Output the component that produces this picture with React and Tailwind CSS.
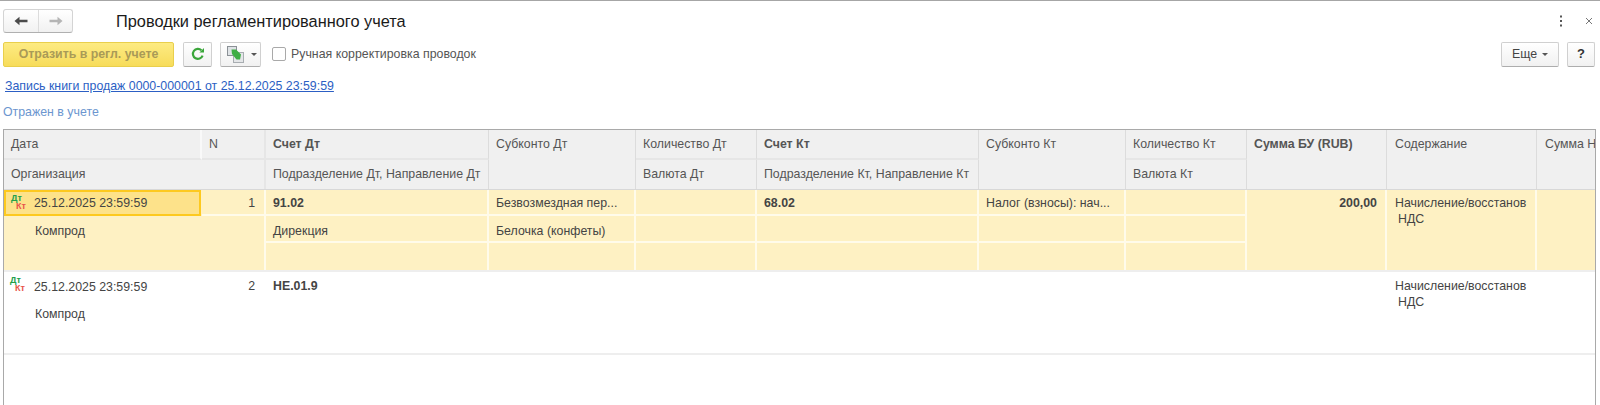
const font = { fontFamily: '"Liberation Sans", Arial, sans-serif' };

function DtKt() {
  return (
    <span className="relative block w-[17px] h-[16px] shrink-0 font-bold leading-none text-[9px]">
      <span className="absolute left-0 top-[-1px] text-[#22a04a]">Дт</span>
      <span className="absolute left-[5px] top-[7px] text-[#e8544a]">Кт</span>
    </span>
  );
}

function HeadCell({ children, className = "" }) {
  return <div className={"bg-[#f0f0f0] px-[7px] pt-[6px] text-[12.35px] leading-[16px] text-[#555] whitespace-nowrap overflow-hidden " + className}>{children}</div>;
}

function Cell({ children, className = "" }) {
  return <div className={"px-[7px] text-[12.35px] leading-[16px] text-[#444] whitespace-nowrap overflow-hidden " + className}>{children}</div>;
}

const cols = "grid-cols-[198px_64px_223px_147px_121px_222px_147px_121px_140px_150px_1fr]";

function Row({ selected, n, acc, sub1, sub2, krAcc, krSub, sum, org, place }) {
  const sep = selected ? "border-r-[2px] border-r-[#fffbea]" : "";
  const sepb = selected ? "border-b-[2px] border-b-[#fffbea]" : "";
  const bg = selected ? "bg-[#fef1c3]" : "bg-white";
  const top = selected ? "pt-[5px]" : "pt-[6px]";
  const second = selected ? "pt-[7px]" : "pt-[8px]";
  return (
    <div className={`grid ${cols} grid-rows-[26px_27px_27px] ${bg}`}>
      <div className={`flex items-center text-[12.35px] text-[#444] ${selected ? "bg-[#fde28a] border-[2px] border-[#fdc91f] pl-[5px] mr-[1px]" : "pl-[6px]"}`}>
        <DtKt /><span className={selected ? "ml-[6px]" : "ml-[7px] mt-[4px]"}>{place}</span>
      </div>
      <Cell className={`text-right ${top} ${selected ? "pr-[9px]" : "pr-[11px]"} ${sep} ${sepb}`}>{n}</Cell>
      <Cell className={`font-bold ${top} ${sep} ${sepb}`}>{acc}</Cell>
      <Cell className={`${top} ${sep} ${sepb}`}>{sub1}</Cell>
      <Cell className={`${sep} ${sepb}`} />
      <Cell className={`font-bold ${top} ${sep} ${sepb}`}>{krAcc}</Cell>
      <Cell className={`${top} ${sep} ${sepb}`}>{krSub}</Cell>
      <Cell className={`${sep} ${sepb}`} />
      <Cell className={`row-span-3 text-right font-bold pr-[8px] ${top} ${sep}`}>{sum}</Cell>
      <div className={`row-span-3 pl-[8px] ${top} text-[12.35px] leading-[16px] text-[#444] whitespace-nowrap overflow-hidden ${sep}`}>
        Начисление/восстанов<br /><span className="ml-[3px]">НДС</span>
      </div>
      <div className="row-span-3" />

      <div className={`col-span-2 row-span-2 pl-[31px] ${second} text-[12.35px] leading-[16px] text-[#444] ${sep}`}>{org}</div>
      <Cell className={`${second} ${sep} ${sepb}`}>{selected ? "Дирекция" : ""}</Cell>
      <Cell className={`${second} ${sep} ${sepb}`}>{sub2}</Cell>
      <Cell className={`${sep} ${sepb}`} />
      <Cell className={`${sep} ${sepb}`} />
      <Cell className={`${sep} ${sepb}`} />
      <Cell className={`${sep} ${sepb}`} />

      <Cell className={sep} />
      <Cell className={sep} />
      <Cell className={sep} />
      <Cell className={sep} />
      <Cell className={sep} />
      <Cell className={sep} />
    </div>
  );
}

export default function App() {
  return (
    <div className="w-[1600px] h-[405px] bg-white overflow-hidden border-t border-[#a6a6a6]" style={font}>
      {/* Title bar */}
      <div className="flex items-center h-[24px] mt-[8px] pl-[3px] pr-[7px]">
        <div className="flex w-[70px] h-[24px] rounded-[3px] border border-[#d4d4d4] border-b-[#b0b0b0] bg-gradient-to-b from-white to-[#f1f1f1]">
          <div className="w-[35px] flex items-center justify-center border-r border-[#dcdcdc]">
            <svg width="14" height="10" viewBox="0 0 14 10"><path d="M0.5 5 L5.5 0.8 V3.7 H13.5 V6.3 H5.5 V9.2 Z" fill="#4a4a4a" /></svg>
          </div>
          <div className="flex-1 flex items-center justify-center">
            <svg width="14" height="10" viewBox="0 0 14 10"><path d="M13.5 5 L8.5 0.8 V3.7 H0.5 V6.3 H8.5 V9.2 Z" fill="#b5b5b5" /></svg>
          </div>
        </div>
        <h1 className="ml-[43px] text-[16.35px] font-normal text-[#1a1a1a] whitespace-nowrap">Проводки регламентированного учета</h1>
        <div className="ml-auto flex items-center">
          <svg width="4" height="12" viewBox="0 0 4 12" className="mr-[22px]">
            <rect x="1" y="0.5" width="2" height="2" fill="#555" /><rect x="1" y="5" width="2" height="2" fill="#555" /><rect x="1" y="9.5" width="2" height="2" fill="#555" />
          </svg>
          <svg width="8" height="8" viewBox="0 0 8 8"><path d="M1 1 L7 7 M7 1 L1 7" stroke="#777" strokeWidth="1" /></svg>
        </div>
      </div>

      {/* Command bar */}
      <div className="flex items-center h-[26px] mt-[8px] pl-[3px] pr-[5px]">
        <div className="flex items-center justify-center w-[171px] h-[25px] rounded-[2px] bg-gradient-to-b from-[#fdeb82] to-[#f7dc5a] border border-[#e9cf4c] text-[12.35px] font-bold text-[#a99a57]">Отразить в регл. учете</div>
        <div className="ml-[9px] w-[29px] h-[25px] flex items-center justify-center rounded-[2px] border border-[#d0d0d0] border-b-[#adadad] bg-gradient-to-b from-white to-[#f1f1f1]">
          <svg width="14" height="14" viewBox="0 0 14 14" fill="none">
            <path d="M11.6 8.6 A5 5 0 1 1 10.4 3.2" stroke="#3aa63a" strokeWidth="2.2" />
            <path d="M8.4 5.6 H13 V1 Z" fill="#3aa63a" />
          </svg>
        </div>
        <div className="ml-[8px] w-[41px] h-[25px] flex items-center pl-[6px] gap-[7px] rounded-[2px] border border-[#d0d0d0] border-b-[#adadad] bg-gradient-to-b from-white to-[#f1f1f1]">
          <svg width="17" height="17" viewBox="0 0 17 17" fill="none">
            <rect x="0.5" y="0.5" width="9" height="9" fill="#dfe3e6" stroke="#8b9196" />
            <rect x="6.5" y="6.5" width="10" height="10" fill="#e4e6e8" stroke="#a8adb1" />
            <path d="M4.5 3.5 L9 3.5 L14 8.5 L13 13.5 L9.5 13.5 L5 8 Z" fill="#3fae45" />
          </svg>
          <svg width="6" height="3" viewBox="0 0 6 3"><path d="M0 0 H6 L3 3 Z" fill="#555" /></svg>
        </div>
        <div className="ml-[11px] w-[14px] h-[14px] rounded-[2px] border border-[#a9a9a9] bg-white" />
        <span className="ml-[5px] text-[12.35px] text-[#555] whitespace-nowrap">Ручная корректировка проводок</span>
        <div className="ml-auto flex items-center">
          <div className="w-[58px] h-[25px] flex items-center justify-center gap-[5px] rounded-[2px] border border-[#d0d0d0] border-b-[#adadad] bg-gradient-to-b from-white to-[#f1f1f1] text-[12.35px] text-[#444]">
            Еще
            <svg width="6" height="3" viewBox="0 0 6 3"><path d="M0 0 H6 L3 3 Z" fill="#555" /></svg>
          </div>
          <div className="ml-[8px] w-[28px] h-[25px] flex items-center justify-center rounded-[2px] border border-[#d0d0d0] border-b-[#adadad] bg-gradient-to-b from-white to-[#f1f1f1] text-[13px] font-bold text-[#333]">?</div>
        </div>
      </div>

      <div className="mt-[9px] pl-[5px] h-[20px] text-[12.35px] leading-[20px]">
        <span className="text-[#2c5fc4] underline">Запись книги продаж 0000-000001 от 25.12.2025 23:59:59</span>
      </div>
      <div className="mt-[6px] pl-[3px] h-[20px] text-[12.35px] leading-[20px] text-[#6c96cf]">Отражен в учете</div>

      {/* Table */}
      <div className="mt-[7px] ml-[3px] mr-[4px] h-[300px] border-l border-t border-r border-[#a9a9a9] overflow-hidden">
        <div className={`grid ${cols} grid-rows-[30px_29px] bg-[#fff] border-b border-[#d8d8d8]`}>
          <HeadCell className="border-r-[2px] border-r-[#f9f9f9] border-b-[2px] border-b-[#e6e6e6]">Дата</HeadCell>
          <HeadCell className="border-r-[2px] border-r-[#e6e6e6] border-b-[2px] border-b-[#e6e6e6]">N</HeadCell>
          <HeadCell className="font-bold border-r-[1px] border-r-[#dcdcdc] border-b-[2px] border-b-[#e6e6e6]">Счет Дт</HeadCell>
          <HeadCell className="row-span-2 border-r border-r-[#dcdcdc]">Субконто Дт</HeadCell>
          <HeadCell className="border-r border-r-[#dcdcdc] border-b-[2px] border-b-[#e6e6e6]">Количество Дт</HeadCell>
          <HeadCell className="font-bold border-r border-r-[#dcdcdc] border-b-[2px] border-b-[#e6e6e6]">Счет Кт</HeadCell>
          <HeadCell className="row-span-2 border-r border-r-[#dcdcdc]">Субконто Кт</HeadCell>
          <HeadCell className="border-r border-r-[#dcdcdc] border-b-[2px] border-b-[#e6e6e6]">Количество Кт</HeadCell>
          <HeadCell className="row-span-2 font-bold border-r border-r-[#dcdcdc]">Сумма БУ (RUB)</HeadCell>
          <HeadCell className="row-span-2 border-r border-r-[#dcdcdc] pl-[8px]">Содержание</HeadCell>
          <HeadCell className="row-span-2 pl-[8px]">Сумма Н</HeadCell>
          <HeadCell className="col-span-2 border-r-[2px] border-r-[#e6e6e6]">Организация</HeadCell>
          <HeadCell className="border-r border-r-[#dcdcdc]">Подразделение Дт, Направление Дт</HeadCell>
          <HeadCell className="border-r border-r-[#dcdcdc]">Валюта Дт</HeadCell>
          <HeadCell className="border-r border-r-[#dcdcdc]">Подразделение Кт, Направление Кт</HeadCell>
          <HeadCell className="border-r border-r-[#dcdcdc]">Валюта Кт</HeadCell>
        </div>
        <div className="border-b-[2px] border-[#eeeeee]">
          <Row selected n="1" acc="91.02" sub1="Безвозмездная пер..." sub2="Белочка (конфеты)" krAcc="68.02" krSub="Налог (взносы): нач..." sum="200,00" org="Компрод" place="25.12.2025 23:59:59" />
        </div>
        <div className="border-b-[2px] border-[#eeeeee] pb-[1px]">
          <Row n="2" acc="НЕ.01.9" sub1="" sub2="" krAcc="" krSub="" sum="" org="Компрод" place="25.12.2025 23:59:59" />
        </div>
      </div>
    </div>
  );
}
